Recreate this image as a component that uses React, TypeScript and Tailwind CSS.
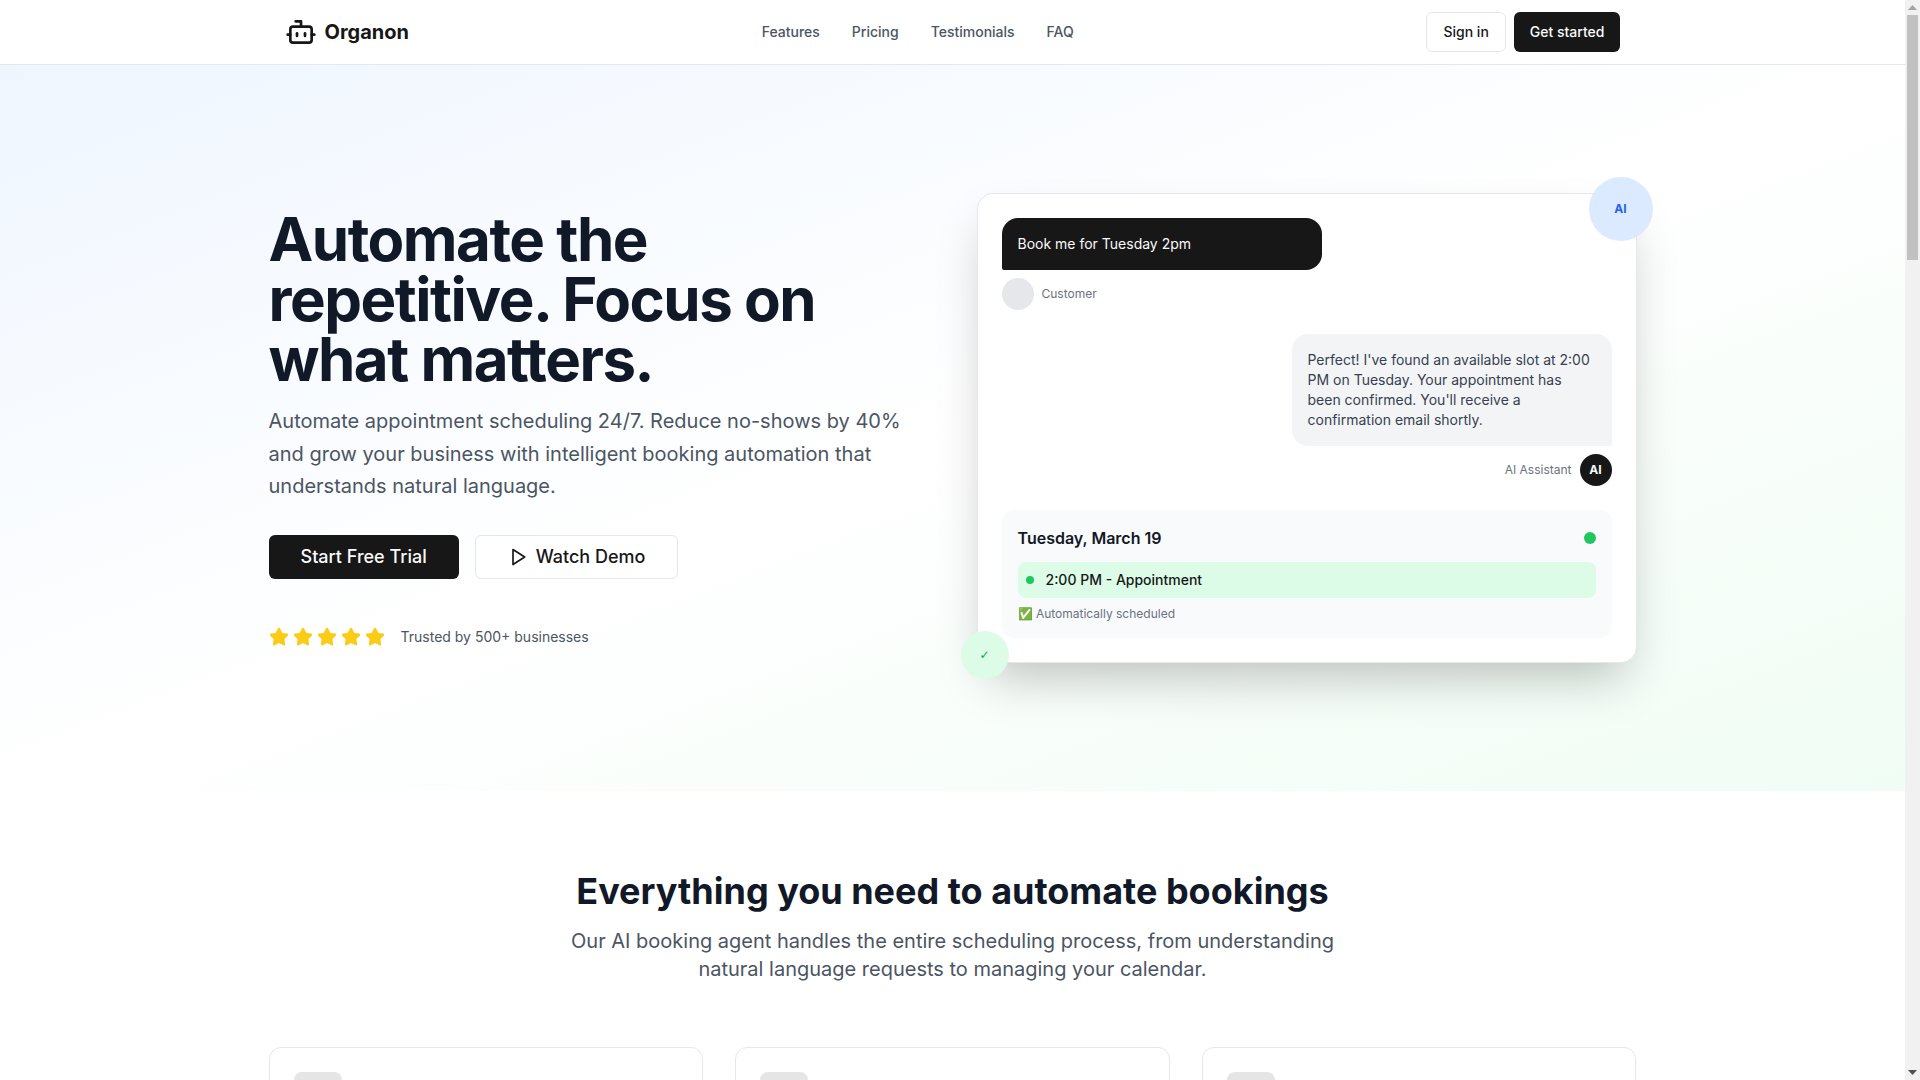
import React from "react";
import { Bot, Star } from "lucide-react";

function Stars() {
  return (
    <div className="flex gap-1">
      {[0, 1, 2, 3, 4].map((i) => (
        <Star key={i} className="h-5 w-5 fill-[#facc15] text-[#facc15]" />
      ))}
    </div>
  );
}

function PlayIcon() {
  return (
    <svg className="mr-2 h-5 w-5" viewBox="0 0 24 24" fill="none" stroke="currentColor" strokeWidth="2" strokeLinecap="round" strokeLinejoin="round">
      <polygon points="6 3 20 12 6 21 6 3" />
    </svg>
  );
}

function Scrollbar() {
  return (
    <div className="fixed bottom-0 right-0 top-0 flex w-[15px] flex-col bg-[#f1f1f1]">
      <div className="flex h-[15px] items-center justify-center">
        <svg width="9" height="5" viewBox="0 0 9 5"><polygon points="4.5,0 9,5 0,5" fill="#a3a3a3" /></svg>
      </div>
      <div className="mx-[2px] h-[245px] bg-[#c1c1c1]" />
      <div className="flex-1" />
      <div className="flex h-[15px] items-center justify-center">
        <svg width="9" height="5" viewBox="0 0 9 5"><polygon points="0,0 9,0 4.5,5" fill="#505050" /></svg>
      </div>
    </div>
  );
}

function Header() {
  return (
    <header className="border-b border-[#e5e7eb] bg-white">
      <div className="mx-auto flex h-16 max-w-[1400px] items-center justify-between px-8">
        <div className="flex items-center gap-2">
          <Bot className="h-8 w-8 text-[#171717]" />
          <span className="text-xl font-bold text-[#171717]">Organon</span>
        </div>
        <nav className="flex items-center gap-8 text-sm font-medium text-[#4b5563]">
          <a>Features</a>
          <a>Pricing</a>
          <a>Testimonials</a>
          <a>FAQ</a>
        </nav>
        <div className="flex items-center gap-2">
          <button className="h-10 rounded-md border border-[#e5e7eb] bg-white px-4 text-sm font-medium text-[#171717]">Sign in</button>
          <button className="h-10 rounded-md bg-[#171717] px-4 text-sm font-medium text-[#fafafa]">Get started</button>
        </div>
      </div>
    </header>
  );
}

function ChatCard() {
  return (
    <div className="relative">
      <div className="rounded-2xl border border-[#e5e7eb] bg-white p-6 shadow-[0_25px_50px_-12px_rgba(0,0,0,0.25)]">
        <div className="flex flex-col gap-6">
          <div className="flex flex-col items-start gap-2">
            <div className="w-80 rounded-2xl rounded-bl-[2px] bg-[#171717] p-4 text-sm text-[#fafafa]">Book me for Tuesday 2pm</div>
            <div className="flex items-center gap-2">
              <div className="h-8 w-8 rounded-full bg-[#e5e7eb]" />
              <span className="text-xs text-[#6b7280]">Customer</span>
            </div>
          </div>
          <div className="flex flex-col items-end gap-2">
            <div className="w-80 rounded-2xl rounded-br-[2px] bg-[#f3f4f6] p-4 text-sm text-[#374151]">
              Perfect! I've found an available slot at 2:00 PM on Tuesday. Your appointment has been confirmed. You'll receive a confirmation email shortly.
            </div>
            <div className="flex items-center gap-2">
              <span className="text-xs text-[#6b7280]">AI Assistant</span>
              <div className="flex h-8 w-8 items-center justify-center rounded-full bg-[#171717] text-xs font-bold text-[#fafafa]">AI</div>
            </div>
          </div>
          <div className="rounded-xl bg-[#f9fafb] p-4">
            <div className="mb-3 flex items-center justify-between">
              <span className="font-semibold text-[#111827]">Tuesday, March 19</span>
              <div className="h-3 w-3 rounded-full bg-[#22c55e]" />
            </div>
            <div className="flex items-center gap-3 rounded-lg bg-[#dcfce7] p-2 text-sm font-medium text-[#171717]">
              <div className="h-2 w-2 rounded-full bg-[#22c55e]" />
              <span>2:00 PM - Appointment</span>
            </div>
            <div className="mt-2 text-xs text-[#6b7280]">✅ Automatically scheduled</div>
          </div>
        </div>
      </div>
      <div className="absolute -right-4 -top-4 flex h-16 w-16 items-center justify-center rounded-full bg-[#dbeafe] text-xs font-bold text-[#2563eb]">AI</div>
      <div className="absolute -bottom-4 -left-4 flex h-12 w-12 items-center justify-center rounded-full bg-[#dcfce7] font-['DejaVu_Sans',sans-serif] text-xs text-[#16a34a]">✓</div>
    </div>
  );
}

function Hero() {
  return (
    <section className="bg-gradient-to-br from-[#eff6ff] via-white to-[#f0fdf4] py-32">
      <div className="mx-auto max-w-[1400px] px-4">
        <div className="grid grid-cols-2 items-center gap-12">
          <div>
            <h1 className="text-6xl font-bold leading-none tracking-tight text-[#111827]">Automate the repetitive. Focus on what matters.</h1>
            <p className="mt-4 text-xl leading-relaxed text-[#4b5563]">
              Automate appointment scheduling 24/7. Reduce no-shows by 40% and grow your business with intelligent booking automation that understands natural language.
            </p>
            <div className="mt-8 flex gap-4">
              <button className="h-11 rounded-md bg-[#171717] px-8 text-lg font-medium text-[#fafafa]">Start Free Trial</button>
              <button className="flex h-11 items-center rounded-md border border-[#e5e7eb] bg-white px-8 text-lg font-medium text-[#171717]">
                <PlayIcon />
                Watch Demo
              </button>
            </div>
            <div className="mt-12 flex items-center gap-4">
              <Stars />
              <span className="text-sm text-[#4b5563]">Trusted by 500+ businesses</span>
            </div>
          </div>
          <ChatCard />
        </div>
      </div>
    </section>
  );
}

function Features() {
  return (
    <section className="bg-white py-20">
      <div className="mx-auto max-w-[1400px] px-4">
        <div className="mb-16 text-center">
          <h2 className="mb-4 text-4xl font-bold text-[#111827]">Everything you need to automate bookings</h2>
          <p className="mx-auto max-w-3xl text-xl text-[#4b5563]">
            Our AI booking agent handles the entire scheduling process, from understanding natural language requests to managing your calendar.
          </p>
        </div>
        <div className="grid grid-cols-3 gap-8">
          {[0, 1, 2].map((i) => (
            <div key={i} className="h-[240px] rounded-xl border border-[#e5e7eb] bg-white p-6">
              <div className="h-12 w-12 rounded-lg bg-[#e5e5e5]" />
            </div>
          ))}
        </div>
      </div>
    </section>
  );
}

export default function App() {
  return (
    <div className="min-h-[4630px] bg-white font-['Inter',sans-serif] text-[#171717]">
      <div className="mr-[15px]">
        <Header />
        <Hero />
        <Features />
      </div>
      <Scrollbar />
    </div>
  );
}
